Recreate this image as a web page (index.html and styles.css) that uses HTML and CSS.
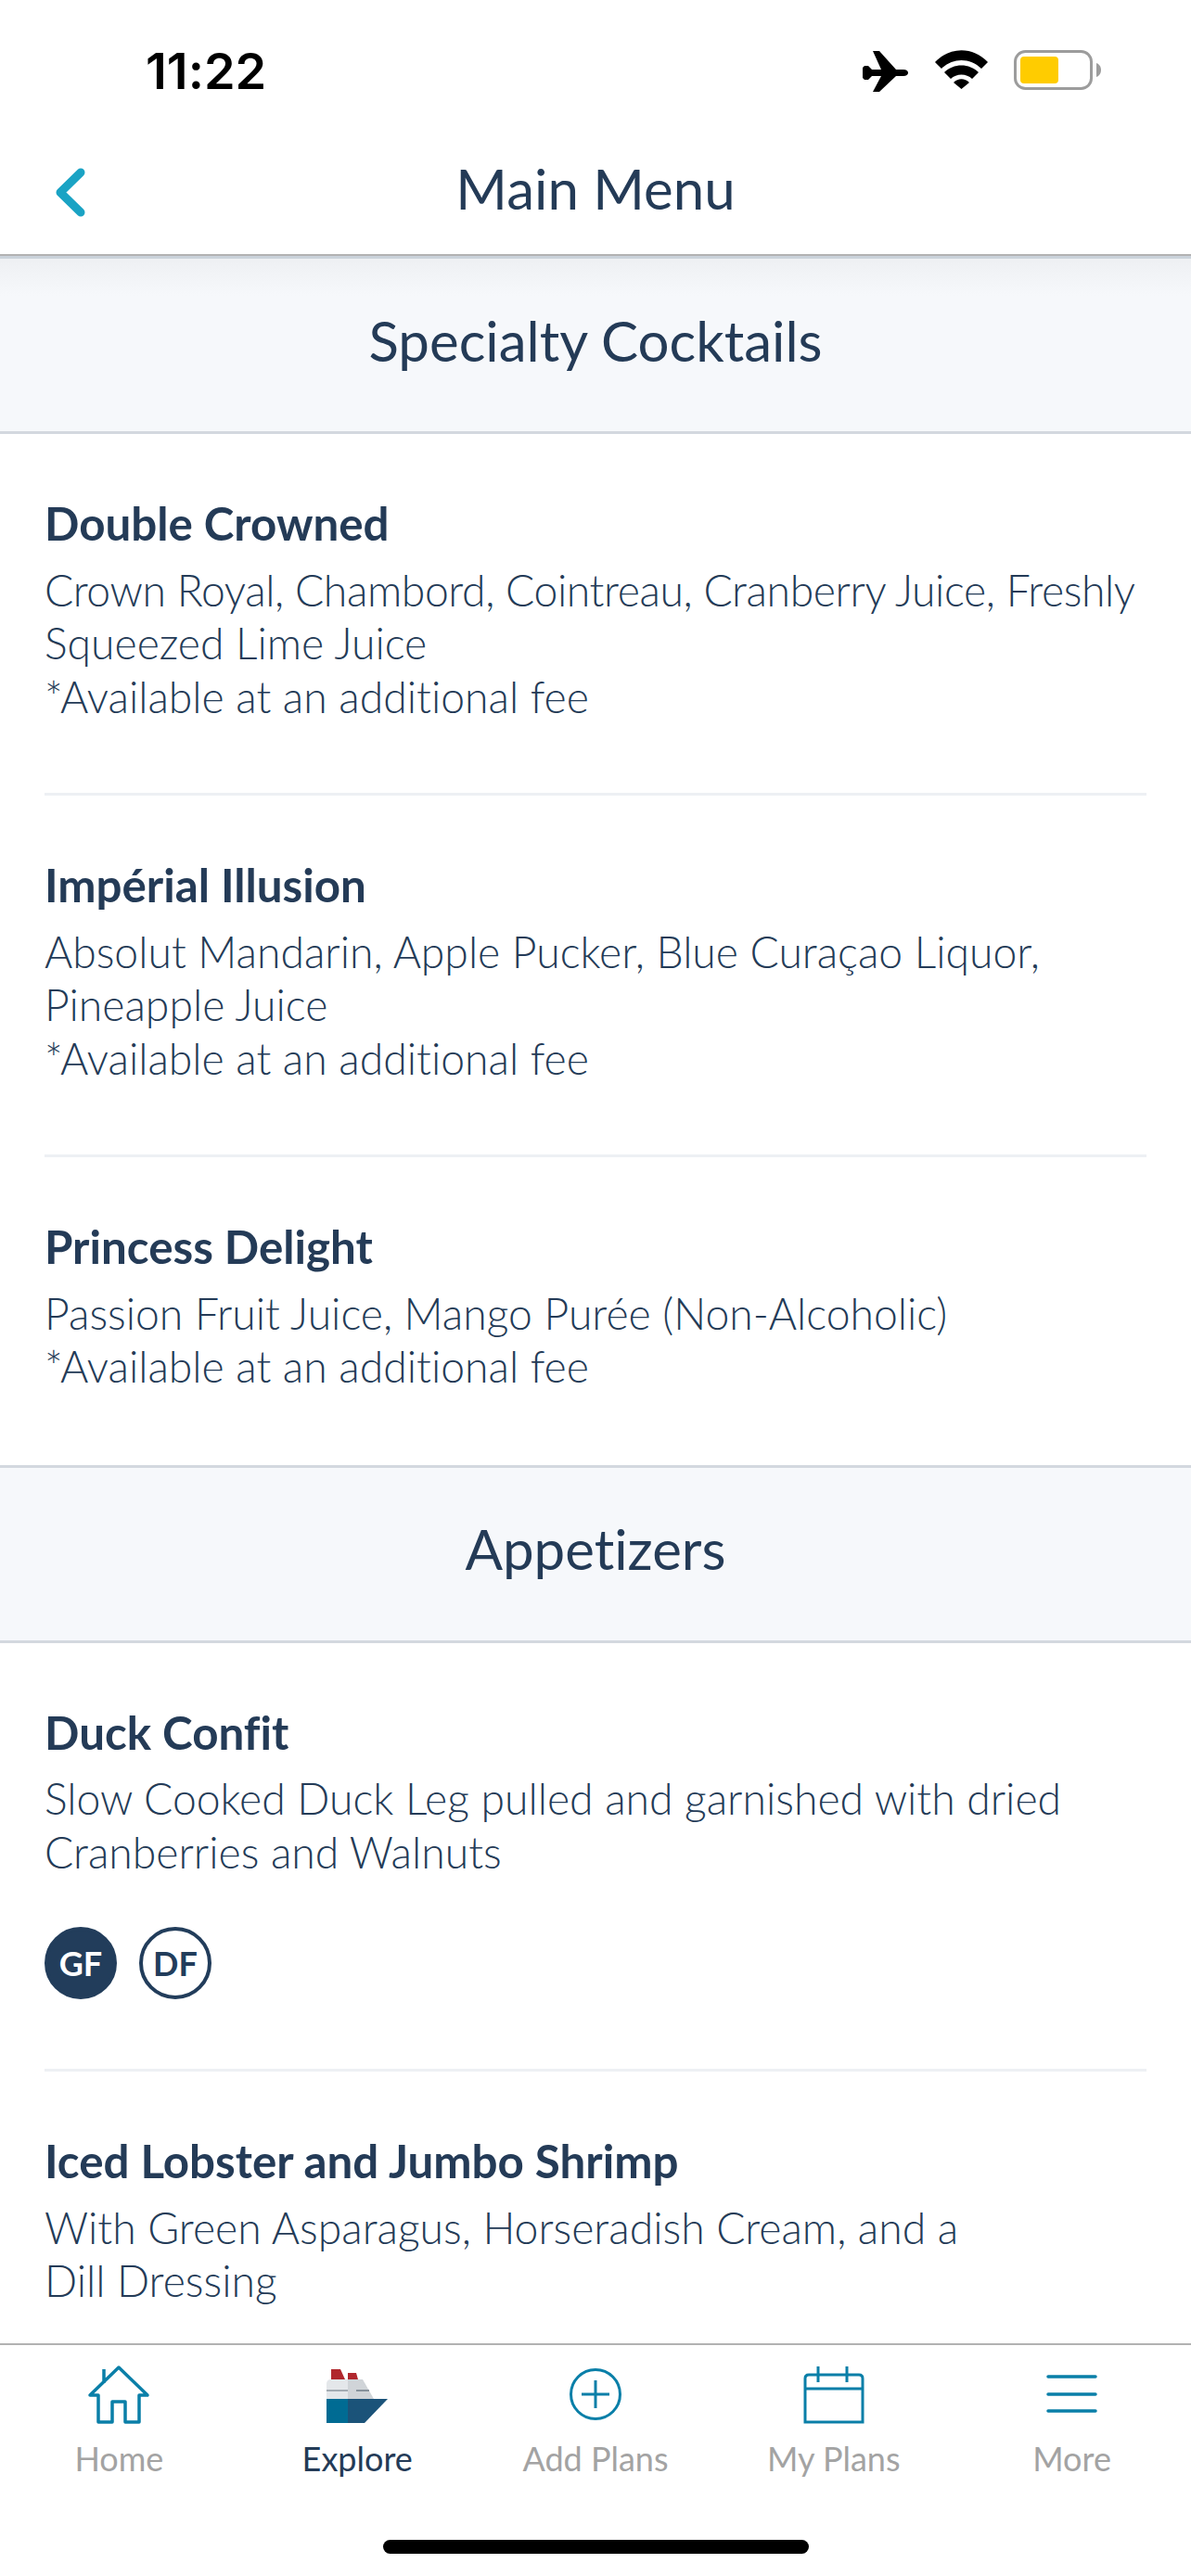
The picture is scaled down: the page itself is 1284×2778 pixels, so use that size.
FILE: index.html
```html
<!DOCTYPE html>
<html lang="en">
<head>
    <meta charset="UTF-8">
    <meta name="viewport" content="width=device-width, initial-scale=1.0">
    <title>Main Menu</title>
    <link rel="stylesheet" href="styles.css">
</head>
<body>
    <div class="status-bar">
        <span class="clock">11:22</span>
        <svg class="status-icons" width="262" height="50" viewBox="925 50 262 50">
            <!-- plane -->
            <path d="M941 55h7l18 20h8c3 0 5 1.500 5 3.500s-2 3.500-5 3.500h-8l-18 17h-7l9-17h-10l-4 4h-4l-2-2v-11l2-2h4l4 4h10z" fill="#000"/>
            <!-- wifi -->
            <path d="M1008 67c16-17 41-17 57 0l-7 7c-12-12-31-12-43 0z M1018 78c10-10 27-10 37 0l-7 7c-6-6-17-6-23 0z M1028 89c5-5 12-5 17 0l-8.500 7z" fill="#000"/>
            <!-- battery -->
            <rect x="1094.500" y="55.500" width="82" height="40" rx="11" fill="#fff" stroke="#9c9c9c" stroke-width="3"/>
            <rect x="1100" y="61" width="41" height="29" rx="4" fill="#ffcc00"/>
            <path d="M1182 68c3 1 5 4 5 7.500s-2 6.500-5 7.500z" fill="#9c9c9c"/>
        </svg>
    </div>

    <div class="nav-bar">
        <svg class="back" width="32" height="53" viewBox="0 0 32 53">
            <path d="M27 5L5 26.500L27 48" fill="none" stroke="#1aa3c4" stroke-width="9" stroke-linecap="round" stroke-linejoin="round"/>
        </svg>
        <h1 class="nav-title">Main Menu</h1>
    </div>

    <div class="content">
        <div class="section-head first"><h2>Specialty Cocktails</h2></div>
        <div class="item">
            <h3>Double Crowned</h3>
            <p><span class="tight">Crown Royal, Chambord, Cointreau, Cranberry Juice, Freshly</span><br>Squeezed Lime Juice<br>*Available at an additional fee</p>
        </div>
        <div class="item">
            <h3>Impérial Illusion</h3>
            <p>Absolut Mandarin, Apple Pucker, Blue Curaçao Liquor,<br>Pineapple Juice<br>*Available at an additional fee</p>
        </div>
        <div class="item last">
            <h3>Princess Delight</h3>
            <p>Passion Fruit Juice, Mango Purée (Non-Alcoholic)<br>*Available at an additional fee</p>
        </div>

        <div class="section-head"><h2>Appetizers</h2></div>
        <div class="item">
            <h3>Duck Confit</h3>
            <p>Slow Cooked Duck Leg pulled and garnished with dried Cranberries and Walnuts</p>
            <div class="badges">
                <span class="badge solid">GF</span>
                <span class="badge">DF</span>
            </div>
        </div>
        <div class="item">
            <h3>Iced Lobster and Jumbo Shrimp</h3>
            <p>With Green Asparagus, Horseradish Cream, and a<br>Dill Dressing</p>
        </div>
    </div>

    <div class="tab-bar">
        <div class="tab">
            <svg width="70" height="66" viewBox="93 2550 70 66" fill="none" stroke="#0a7fa8" stroke-width="3.500">
                <path d="M112 2555v15 M97 2583L128 2553L159 2583H150V2612H135V2590H121V2612H106V2583z" stroke-linejoin="round"/>
            </svg>
            <span>Home</span>
        </div>
        <div class="tab active">
            <svg width="70" height="66" viewBox="349 2550 70 66">
                <path d="M356 2555h10l5 11h-15z" fill="#b0272d"/>
                <path d="M374 2559h9l2 7h-11z" fill="#b0272d"/>
                <path d="M351 2571q0-5 5-5h18v21h-23z" fill="#e4e7ea"/>
                <path d="M374 2566h16l12 21h-28z" fill="#d0d4d8"/>
                <path d="M351 2577h23v2h-23z" fill="#a3abb2"/>
                <path d="M383 2577h14v2h-14z" fill="#87919b"/>
                <path d="M351 2587h23v26h-23z" fill="#006b93"/>
                <path d="M374 2587h43l-25 26h-18z" fill="#1b5379"/>
            </svg>
            <span>Explore</span>
        </div>
        <div class="tab">
            <svg width="70" height="66" viewBox="606 2550 70 66" fill="none" stroke="#0a7fa8" stroke-width="3">
                <circle cx="641" cy="2582" r="26.500"/>
                <path d="M626 2582h30 M641 2567v30"/>
            </svg>
            <span>Add Plans</span>
        </div>
        <div class="tab">
            <svg width="70" height="66" viewBox="863 2550 70 66" fill="none" stroke="#0a7fa8" stroke-width="3">
                <path d="M867 2612V2565q0-4 4-4h54q4 0 4 4V2612z M867 2576h62 M881 2552v17 M912 2552v17"/>
            </svg>
            <span>My Plans</span>
        </div>
        <div class="tab">
            <svg width="70" height="66" viewBox="1120 2550 70 66" fill="none" stroke="#0a7fa8" stroke-width="3.500" stroke-linecap="round">
                <path d="M1129 2563h51 M1129 2582h51 M1129 2600h51"/>
            </svg>
            <span>More</span>
        </div>
    </div>

    <div class="home-strip"><div class="home-indicator"></div></div>
</body>
</html>
```

FILE: styles.css
```css
* {
    box-sizing: border-box;
}
html, body {
    margin: 0;
    padding: 0;
}
body {
    width: 1284px;
    height: 2778px;
    display: flex;
    flex-direction: column;
    overflow: hidden;
    background-color: #fff;
    font-family: Lato, "Open Sans", sans-serif;
    font-variant-ligatures: none;
    color: #243b57;
}

.status-bar {
    height: 150px;
    flex: none;
    display: flex;
    justify-content: space-between;
    align-items: flex-start;
    padding: 50px 97px 0 157px;
}
.clock {
    font-family: Inter, "Liberation Sans", sans-serif;
    font-weight: 600;
    font-size: 54px;
    line-height: 54px;
    color: #000;
}

.nav-bar {
    height: 126px;
    flex: none;
    display: flex;
    align-items: center;
    justify-content: center;
    position: relative;
    padding-bottom: 19px;
    border-bottom: 2px solid #b2b2b2;
}
.back {
    position: absolute;
    left: 60px;
    top: 31px;
}
.nav-title {
    margin: 0;
    font-size: 60px;
    font-weight: 400;
}

.content {
    flex: 1;
    min-height: 0;
    overflow: hidden;
}
.section-head {
    height: 192px;
    display: flex;
    align-items: center;
    justify-content: center;
    padding-bottom: 12px;
    background-color: #f6f8fb;
    border-top: 3px solid #d3d8df;
    border-bottom: 3px solid #d3d8df;
}
.section-head.first {
    padding-bottom: 10px;
    border-top-color: #cbd3db;
    background-image: linear-gradient(#eef0f3, #f6f8fb 40px);
}
.section-head h2 {
    margin: 0;
    font-size: 60px;
    font-weight: 400;
}

.item {
    margin: 0 48px;
    padding: 68px 0 75px;
    border-bottom: 3px solid #edf0f4;
}
.item.last {
    border-bottom: none;
    padding-bottom: 77px;
}
.item h3 {
    margin: 0 0 14px;
    font-size: 49.300px;
    line-height: 57.5px;
    font-weight: 700;
}
.item p {
    margin: 0;
    font-size: 46.300px;
    line-height: 57.5px;
    font-weight: 300;
}
.tight {
    letter-spacing: -0.4px;
}

.badges {
    display: flex;
    gap: 24px;
    margin-top: 52px;
}
.badge {
    width: 78px;
    height: 78px;
    display: flex;
    align-items: center;
    justify-content: center;
    border: 4px solid #223d5b;
    border-radius: 50%;
    color: #223d5b;
    font-size: 36px;
    font-weight: 700;
}
.badge.solid {
    background-color: #223d5b;
    color: #fff;
}

.tab-bar {
    height: 168px;
    flex: none;
    display: flex;
    border-top: 2px solid #b2b2b2;
    background-color: #fff;
}
.tab {
    flex: 1;
    display: flex;
    flex-direction: column;
    align-items: center;
    padding-top: 21px;
    font-size: 36px;
    line-height: 42px;
    color: #a3a3a3;
}
.tab svg {
    flex: none;
    margin-bottom: 14px;
}
.tab.active {
    color: #243b57;
}

.home-strip {
    height: 83px;
    flex: none;
    display: flex;
    justify-content: center;
    padding-top: 44px;
}
.home-indicator {
    width: 459px;
    height: 15px;
    border-radius: 8px;
    background-color: #000;
}
```
